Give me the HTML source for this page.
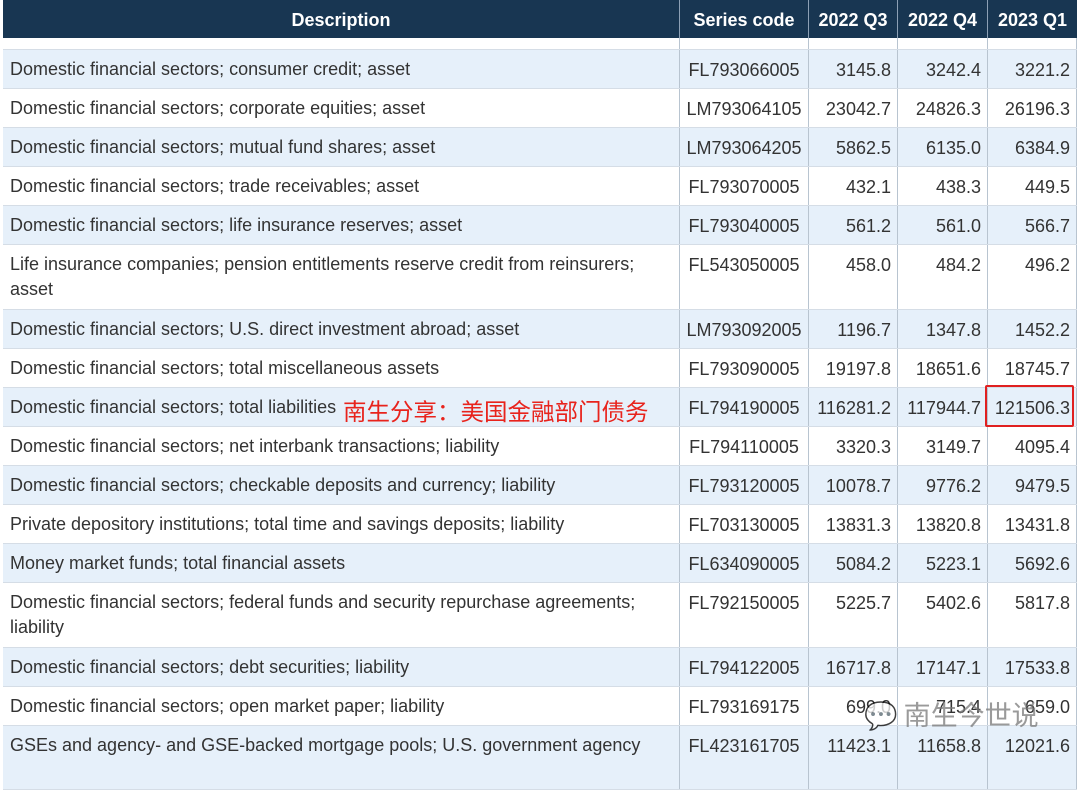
<!DOCTYPE html><html><head><meta charset="utf-8"><style>
body{margin:0;width:1080px;height:760px;overflow:hidden;background:#fff;font-family:"Liberation Sans",Arial,sans-serif;position:relative}
.r{position:absolute;left:3px;width:1074px;border-bottom:1px solid #d5dde6;box-sizing:border-box}
.b{background:#e6f0fa}
.c{position:absolute;top:0;bottom:0;border-left:1px solid #b8c4d0;box-sizing:border-box;font-size:18px;color:#333;padding-top:10px}
.d{left:0;width:676px;padding-left:7px;border-left:none;line-height:25px;padding-top:7px}
.s{left:676px;width:129px;text-align:center}
.n{text-align:right;padding-right:6px}
.q3{left:805px;width:89px}.q4{left:894px;width:90px}.q1{left:984px;width:90px;border-right:1px solid #b8c4d0}
.h{position:absolute;top:0;left:3px;width:1074px;height:38px;background:#183652}
.h div{position:absolute;top:0;height:38px;line-height:40px;color:#fff;font-weight:bold;font-size:18px;text-align:center;border-left:1px solid #8da0b5;box-sizing:border-box}
</style></head><body>
<div class="r" style="top:38px;height:12px"><div class="c d"></div><div class="c s"></div><div class="c n q3"></div><div class="c n q4"></div><div class="c n q1"></div></div>
<div class="h"><div style="left:0;width:676px;border:none">Description</div><div style="left:676px;width:129px">Series code</div><div style="left:805px;width:89px">2022 Q3</div><div style="left:894px;width:90px">2022 Q4</div><div style="left:984px;width:90px">2023 Q1</div></div>
<div id="t"></div>
<div style="position:absolute;left:343px;top:393px;color:#e8231c;font-size:23.5px;font-family:'Liberation Sans','Noto Sans CJK SC',sans-serif;white-space:nowrap">南生分享：美国金融部门债务</div>
<div style="position:absolute;left:985px;top:385px;width:89px;height:42px;border:2px solid #e02020;box-sizing:border-box;border-radius:2px"></div>
<div style="position:absolute;left:864px;top:694px;color:rgba(120,120,120,.75);font-size:27px;font-family:'Noto Sans CJK SC',sans-serif;white-space:nowrap">💬 南生今世说</div>
<script>
var d=[["",0,0,0,0],["Domestic financial sectors; consumer credit; asset","FL793066005","3145.8","3242.4","3221.2"],
["Domestic financial sectors; corporate equities; asset","LM793064105","23042.7","24826.3","26196.3"],
["Domestic financial sectors; mutual fund shares; asset","LM793064205","5862.5","6135.0","6384.9"],
["Domestic financial sectors; trade receivables; asset","FL793070005","432.1","438.3","449.5"],
["Domestic financial sectors; life insurance reserves; asset","FL793040005","561.2","561.0","566.7"],
["Life insurance companies; pension entitlements reserve credit from reinsurers;<br>asset","FL543050005","458.0","484.2","496.2"],
["Domestic financial sectors; U.S. direct investment abroad; asset","LM793092005","1196.7","1347.8","1452.2"],
["Domestic financial sectors; total miscellaneous assets","FL793090005","19197.8","18651.6","18745.7"],
["Domestic financial sectors; total liabilities","FL794190005","116281.2","117944.7","121506.3"],
["Domestic financial sectors; net interbank transactions; liability","FL794110005","3320.3","3149.7","4095.4"],
["Domestic financial sectors; checkable deposits and currency; liability","FL793120005","10078.7","9776.2","9479.5"],
["Private depository institutions; total time and savings deposits; liability","FL703130005","13831.3","13820.8","13431.8"],
["Money market funds; total financial assets","FL634090005","5084.2","5223.1","5692.6"],
["Domestic financial sectors; federal funds and security repurchase agreements;<br>liability","FL792150005","5225.7","5402.6","5817.8"],
["Domestic financial sectors; debt securities; liability","FL794122005","16717.8","17147.1","17533.8"],
["Domestic financial sectors; open market paper; liability","FL793169175","699.0","715.4","659.0"],
["GSEs and agency- and GSE-backed mortgage pools; U.S. government agency","FL423161705","11423.1","11658.8","12021.6"]];
var tops=[50,89,128,167,206,245,310,349,388,427,466,505,544,583,648,687,726,790],h="";
for(var i=1;i<d.length;i++){var r=d[i];h+='<div class="r'+(i%2?' b':'')+'" style="top:'+tops[i-1]+'px;height:'+(tops[i]-tops[i-1])+'px"><div class="c d">'+r[0]+'</div><div class="c s">'+r[1]+'</div><div class="c n q3">'+r[2]+'</div><div class="c n q4">'+r[3]+'</div><div class="c n q1">'+r[4]+'</div></div>';}
document.getElementById("t").innerHTML=h;
</script></body></html>
